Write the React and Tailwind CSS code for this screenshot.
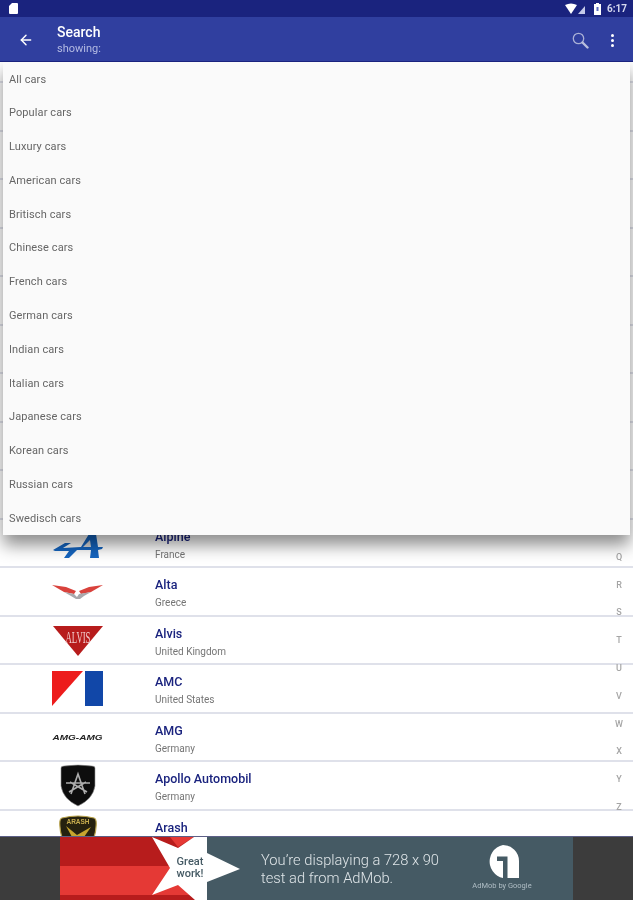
import { ArrowLeft } from "lucide-react";

const menuItems = [
  "All cars",
  "Popular cars",
  "Luxury cars",
  "American cars",
  "Britisch cars",
  "Chinese cars",
  "French cars",
  "German cars",
  "Indian cars",
  "Italian cars",
  "Japanese cars",
  "Korean cars",
  "Russian cars",
  "Swedisch cars",
];

const letters = "ABCDEFGHIJKLMNOPQRSTUVWXYZ".split("");

/* ===================== Logos ===================== */

function AlpineLogo() {
  return (
    <>
      <path d="M37 14 L44 14 L46 27 L51 27 L50 29 L46 30 L47 38 L38 38 L39 30 L25 30 L17 38 L12 38 L17 31 L3 31 L1 30 L13 23 L19 23 L11 28 L29 27 Z" fill="#1565c0" />
      <path d="M38 20 L31 27 L39 27 Z" fill="#dcdcdc" />
    </>
  );
}

function AltaLogo() {
  return (
    <>
      <path d="M0 17 L14 19 L24 23 L22 26 L12 24 Z" fill="#d9423c" />
      <path d="M51 17 L37 19 L27 23 L29 26 L39 24 Z" fill="#d9423c" />
      <path d="M12 24 L22 26 L25 29 L27 26 L39 24 L32 28 L28 31 L24 31 L19 28 Z" fill="#a9a9ad" />
    </>
  );
}

function AlvisLogo() {
  return (
    <>
      <path d="M1 9 L51 9 L26 39 Z" fill="#b71c1c" />
      <text x="26" y="26" textAnchor="middle" fill="#f0c8c8" fontSize="17" fontFamily="Liberation Serif, serif" textLength="25" lengthAdjust="spacingAndGlyphs">ALVIS</text>
    </>
  );
}

function AmcLogo() {
  return (
    <>
      <path d="M0 6 L31 6 L0 41 Z" fill="#ed1c1c" />
      <rect x="33" y="6" width="18" height="35" fill="#1147a8" />
    </>
  );
}

function AmgLogo() {
  return (
    <text x="25.5" y="26" textAnchor="middle" fill="#222" fontSize="7" fontWeight="700" fontStyle="italic" fontFamily="Liberation Sans, sans-serif" textLength="50" lengthAdjust="spacingAndGlyphs">
      AMG-AMG
    </text>
  );
}

function ApolloLogo() {
  return (
    <>
      <path d="M9 6 Q9 4 12 4 Q26 2 40 4 Q43 4 43 6 L43 24 Q41 37 26 44 Q11 37 9 24 Z" fill="#0d0d0d" stroke="#999" strokeWidth="0.6" />
      <path d="M19 32 L26 12 L33 32 M14 21 L38 21 M17 30 L34 20 M35 30 L18 20" fill="none" stroke="#adadad" strokeWidth="1.6" />
    </>
  );
}

function ArashLogo() {
  return (
    <>
      <path d="M10 7 Q26 3 42 7 Q45 8 44 16 Q43 34 26 46 Q9 34 8 16 Q7 8 10 7 Z" fill="#26220f" stroke="#b8a24a" strokeWidth="1.2" />
      <text x="26" y="13" textAnchor="middle" fill="#c7ad4e" fontSize="6.5" fontWeight="700" fontFamily="Liberation Sans, sans-serif">ARASH</text>
      <path d="M14 15 L25 24 L39 16 L32 26 L20 26 Z" fill="#c7a52e" />
    </>
  );
}

const cars = [
  { name: "Abarth", country: "Italy" },
  { name: "AC", country: "United Kingdom" },
  { name: "Acura", country: "Japan" },
  { name: "Adler", country: "Germany" },
  { name: "Aixam", country: "France" },
  { name: "Alfa Romeo", country: "Italy" },
  { name: "Allard", country: "United Kingdom" },
  { name: "Alpina", country: "Germany" },
  { name: "Alpina", country: "Germany" },
  { name: "Alpina", country: "Germany" },
  { name: "Alpine", country: "France", Logo: AlpineLogo },
  { name: "Alta", country: "Greece", Logo: AltaLogo },
  { name: "Alvis", country: "United Kingdom", Logo: AlvisLogo },
  { name: "AMC", country: "United States", Logo: AmcLogo },
  { name: "AMG", country: "Germany", Logo: AmgLogo },
  { name: "Apollo Automobil", country: "Germany", Logo: ApolloLogo },
  { name: "Arash", country: "Iran", Logo: ArashLogo },
];

/* ===================== Sections ===================== */

function StatusBar() {
  return (
    <div className="h-[17px] shrink-0 bg-[#1a237e] flex items-center pl-[9px] pr-[6px] text-white">
      <svg width="9" height="11" viewBox="0 0 9 11" className="mr-auto">
        <path d="M3 0 H8 Q9 0 9 1 V10 Q9 11 8 11 H1 Q0 11 0 10 V3 Z" fill="#fff" />
      </svg>
      <svg width="21" height="12" viewBox="0 0 21 12" className="mr-[8px]">
        <path d="M0 2 Q6 -1 12 2 L6 11 Z" fill="#fff" />
        <path d="M20 3 V11 H13 Z" fill="#c5cae9" />
      </svg>
      <svg width="7" height="12" viewBox="0 0 7 12" className="mr-[6px]">
        <path d="M2 0 H5 V1 H7 V12 H0 V1 H2 Z" fill="#fff" />
        <rect x="2.5" y="4" width="2" height="4" fill="#5c6bc0" />
      </svg>
      <span className="text-[10px] font-bold leading-none text-[#d5d8ee]">6:17</span>
    </div>
  );
}

function Toolbar() {
  return (
    <div className="h-[45px] shrink-0 pt-[2px] bg-[#303f9f] border-b border-[#1a237e] flex items-center text-white">
      <div className="w-[57px] pl-[18px] shrink-0">
        <ArrowLeft size={16} strokeWidth={2.2} />
      </div>
      <div className="flex-1 flex flex-col">
        <span className="text-[14px] leading-[17px] font-medium">Search</span>
        <span className="text-[11px] leading-[14px] mt-[1px] text-[#b4bbe3]">showing:</span>
      </div>
      <svg width="17" height="17" viewBox="0 0 17 17" fill="none" className="mr-[22px]">
        <circle cx="6.5" cy="6.5" r="5.2" stroke="#a9b0d6" strokeWidth="1.3" />
        <path d="M10.5 10.5 L15.5 15.5" stroke="#b9bedd" strokeWidth="2.4" strokeLinecap="round" />
      </svg>
      <div className="flex flex-col gap-[2px] mr-[19px]">
        <span className="w-[3px] h-[3px] rounded-full bg-white" />
        <span className="w-[3px] h-[3px] rounded-full bg-white" />
        <span className="w-[3px] h-[3px] rounded-full bg-white" />
      </div>
    </div>
  );
}

function CarRow({ car }) {
  const Logo = car.Logo;
  return (
    <div className="h-[48.5px] shrink-0 border-b-2 border-[#dfe1ea] bg-white flex">
      <div className="w-[51px] ml-[52px] mr-[52px] shrink-0">
        {Logo && (
          <svg width="51" height="46" viewBox="0 0 51 46">
            <Logo />
          </svg>
        )}
      </div>
      <div className="pt-[8px]">
        <div className="text-[12.5px] leading-[18px] font-medium text-[#1a237e]">{car.name}</div>
        <div className="text-[10px] leading-[14px] mt-[2px] text-[#757575]">{car.country}</div>
      </div>
    </div>
  );
}

function AdBanner() {
  return (
    <div className="h-[64px] shrink-0 bg-[#3c3c3c] border-t border-[#5c5f86] flex justify-center">
      <div className="w-[513px] bg-[#455a64] flex">
        <div className="relative w-[180px] shrink-0">
          <svg width="180" height="63" viewBox="0 0 180 63" className="absolute inset-0">
            <rect width="147" height="63" fill="#b71c1c" />
            <rect y="29" width="147" height="29" fill="#e53935" />
            <path d="M110 0 L134 0 L118 10 Z" fill="#e53935" />
            <path d="M92 0 L118 11 L134 0 L147 0 L147 16 L180 32 L147 45 L147 63 L135 63 L118 48 L92 58 L110 31 Z" fill="#fff" />
          </svg>
          <div className="absolute left-[113px] top-[19px] w-[34px] text-center text-[11px] leading-[12px] font-medium text-[#455a64]">
            Great work!
          </div>
        </div>
        <div className="ml-[21px] mt-[14px] text-[14.7px] leading-[18px] font-light text-[#dfe5e8] w-[200px] shrink-0 whitespace-nowrap">
          <div>You’re displaying a 728 x 90</div>
          <div>test ad from AdMob.</div>
        </div>
        <div className="ml-[10px] mt-[8px] w-[62px] flex flex-col items-center">
          <svg width="33" height="33" viewBox="0 0 33 33">
            <path d="M17 0 A16 16 0 0 1 33 16 V33 H24 A16 16 0 1 1 17 0 Z" fill="#fff" />
            <path d="M11 11.5 H21.5 V33 H17 V16 H11 Z" fill="#455a64" />
          </svg>
          <span className="text-[7.5px] leading-[8px] mt-[4px] text-[#b0bec5] whitespace-nowrap">AdMob by Google</span>
        </div>
      </div>
    </div>
  );
}

export default function App() {
  return (
    <div className="h-[900px] w-[633px] flex flex-col overflow-hidden bg-white blur-[0.4px] font-['Roboto',sans-serif]">
      <StatusBar />
      <Toolbar />

      <div className="relative flex-1 min-h-0 overflow-hidden">
        {/* list is scrolled, so the first row sits partly off-screen */}
        <div className="flex flex-col -mt-[27.5px]">
          {cars.map((car, i) => (
            <CarRow key={i} car={car} />
          ))}
        </div>

        {/* side index */}
        <div className="absolute top-[37px] right-[8px] w-[12px] flex flex-col items-center">
          {letters.map((l) => (
            <span key={l} className="h-[27.8px] flex items-center text-[9px] font-medium text-[#a5a5a5]">
              {l}
            </span>
          ))}
        </div>

        {/* dropdown */}
        <div className="absolute top-0 left-[3px] right-[3px] h-[473px] pt-[1px] bg-[#fafafa] shadow-[0_10px_16px_rgba(0,0,0,0.45)]">
          {menuItems.map((item) => (
            <div key={item} className="h-[33.77px] pl-[6px] flex items-center text-[11px] text-[#666666] tracking-[0.1px]">
              {item}
            </div>
          ))}
        </div>
      </div>

      <AdBanner />
    </div>
  );
}
